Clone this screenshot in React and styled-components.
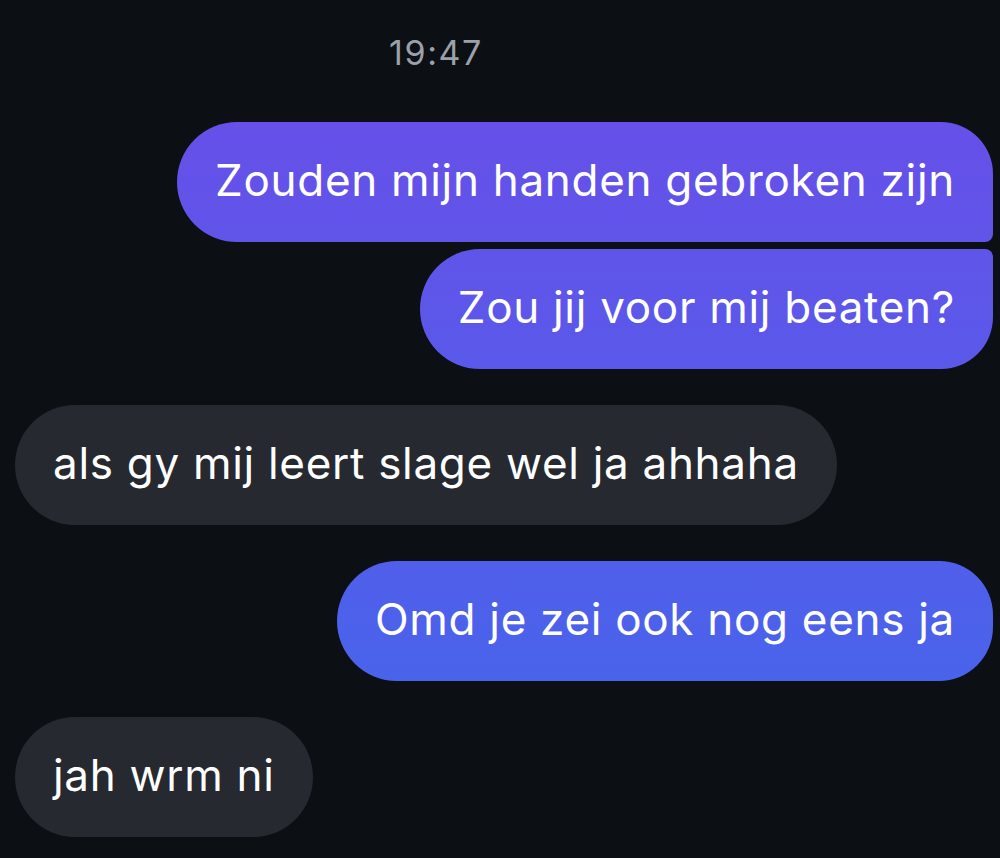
import React from "react";
import styled, { createGlobalStyle } from "styled-components";

const Global = createGlobalStyle`
  html, body { margin: 0; padding: 0; background: #0c0f14; }
  body { font-family: Inter, "Noto Sans", sans-serif; -webkit-font-smoothing: antialiased; }
`;

const Thread = styled.div`
  display: flex;
  flex-direction: column;
  padding: 28px 7px 0 15px;
  height: 858px;
  box-sizing: border-box;
  overflow: hidden;
`;

const Stamp = styled.div`
  color: #9ba1ab;
  font-size: 34px;
  letter-spacing: 1.6px;
  line-height: 50px;
  text-align: center;
  padding-right: 136px;
  margin-bottom: 44px;
`;

const Row = styled.div`
  display: flex;
  justify-content: ${(p) => (p.$mine ? "flex-end" : "flex-start")};
  margin-top: ${(p) => (p.$tight ? "7px" : p.$first ? "0" : "36px")};
`;

const Bubble = styled.div`
  box-sizing: border-box;
  height: 120px;
  display: flex;
  align-items: center;
  padding: 0 38px 4px 38px;
  font-size: 44px;
  letter-spacing: 0.7px;
  color: #ffffff;
  white-space: nowrap;
  border-radius: ${(p) => p.$radius};
  background: ${(p) =>
    p.$mine
      ? "linear-gradient(180deg, rgb(108,76,232) 0px, rgb(65,105,236) 858px) fixed"
      : "#26292f"};
`;

const messages = [
  { text: "Zouden mijn handen gebroken zijn", mine: true, first: true, radius: "60px 52px 8px 60px" },
  { text: "Zou jij voor mij beaten?", mine: true, tight: true, radius: "60px 8px 52px 60px" },
  { text: "als gy mij leert slage wel ja ahhaha", mine: false, radius: "60px" },
  { text: "Omd je zei ook nog eens ja", mine: true, radius: "60px 54px 54px 60px" },
  { text: "jah wrm ni", mine: false, radius: "60px" },
];

export default function App() {
  return (
    <>
      <Global />
      <Thread>
        <Stamp>19:47</Stamp>
        {messages.map((m, i) => (
          <Row key={i} $mine={m.mine} $tight={m.tight} $first={m.first}>
            <Bubble $mine={m.mine} $radius={m.radius}>{m.text}</Bubble>
          </Row>
        ))}
      </Thread>
    </>
  );
}
